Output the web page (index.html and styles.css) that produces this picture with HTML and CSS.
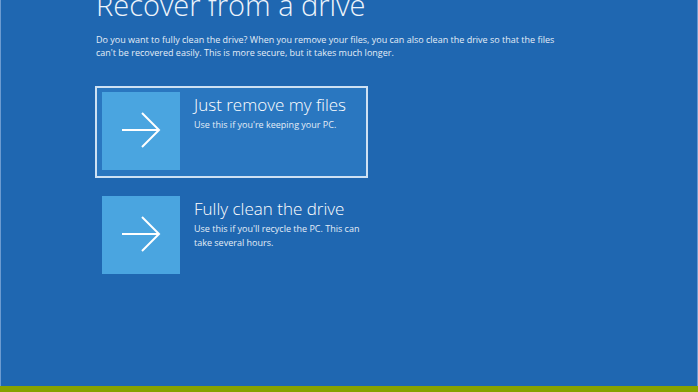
FILE: index.html
```html
<!DOCTYPE html>
<html lang="en">
<head>
    <meta charset="UTF-8">
    <meta name="viewport" content="width=device-width, initial-scale=1.0">
    <title>Recover from a drive</title>
    <link rel="stylesheet" href="styles.css">
</head>
<body>
    <div class="screen">
        <div class="content">
            <h1>Recover from a drive</h1>
            <p class="intro">Do you want to fully clean the drive? When you remove your files, you can also clean the drive so that the files can't be recovered easily. This is more secure, but it takes much longer.</p>

            <div class="options">
                <a class="option selected">
                    <span class="tile">
                        <svg width="78" height="78" viewBox="0 0 78 78">
                            <path d="M20 38 H57 M40 21 L57 38 L40 55" fill="none" stroke="#fff" stroke-width="2"/>
                        </svg>
                    </span>
                    <span class="option-text">
                        <span class="option-title">Just remove my files</span>
                        <span class="option-desc">Use this if you're keeping your PC.</span>
                    </span>
                </a>
                <a class="option">
                    <span class="tile">
                        <svg width="78" height="78" viewBox="0 0 78 78">
                            <path d="M20 38 H57 M40 21 L57 38 L40 55" fill="none" stroke="#fff" stroke-width="2"/>
                        </svg>
                    </span>
                    <span class="option-text">
                        <span class="option-title">Fully clean the drive</span>
                        <span class="option-desc">Use this if you'll recycle the PC. This can take several hours.</span>
                    </span>
                </a>
            </div>
        </div>
    </div>
    <footer class="bottom-bar"></footer>
</body>
</html>
```

FILE: styles.css
```css
    body {
        margin: 0;
        padding: 0;
        height: 392px;
        overflow: hidden;
        font-family: "Open Sans", Arial, sans-serif;
        background-color: #1f67b1;
        color: #fff;
        display: flex;
        flex-direction: column;
    }

    .screen {
        flex: 1;
        border-left: 1px solid #6c9bd0;
        border-right: 1px solid #6c9bd0;
        overflow: hidden;
    }

    .content {
        padding-left: 95px;
    }

    h1 {
        font-weight: 300;
        font-size: 29px;
        line-height: 36px;
        margin: -13px 0 0 0;
        color: #eef4fb;
    }

    .intro {
        font-size: 9px;
        line-height: 13px;
        width: 480px;
        margin: 10px 0 0 0;
        color: #e4edf7;
    }

    .options {
        display: flex;
        flex-direction: column;
        gap: 12px;
        margin-top: 27px;
        margin-left: -1px;
    }

    .option {
        display: flex;
        width: 260px;
        height: 80px;
        padding: 4px 4px 4px 5px;
        border: 2px solid transparent;
        text-decoration: none;
        color: #fff;
        cursor: pointer;
    }

    .option.selected {
        background-color: #2a77c0;
        border-color: rgba(235, 243, 252, 0.85);
    }

    .tile {
        width: 78px;
        height: 78px;
        background-color: #4aa5e0;
        flex-shrink: 0;
    }

    .tile svg {
        display: block;
    }

    .option-text {
        display: flex;
        flex-direction: column;
        padding-left: 14px;
        padding-top: 2px;
        width: 172px;
    }

    .option-title {
        font-weight: 300;
        font-size: 17px;
        line-height: 22px;
        margin-bottom: 2px;
    }

    .option-desc {
        font-size: 9px;
        line-height: 14px;
        color: #e4edf7;
    }

    .bottom-bar {
        height: 6px;
        background-color: #86a200;
    }
```
